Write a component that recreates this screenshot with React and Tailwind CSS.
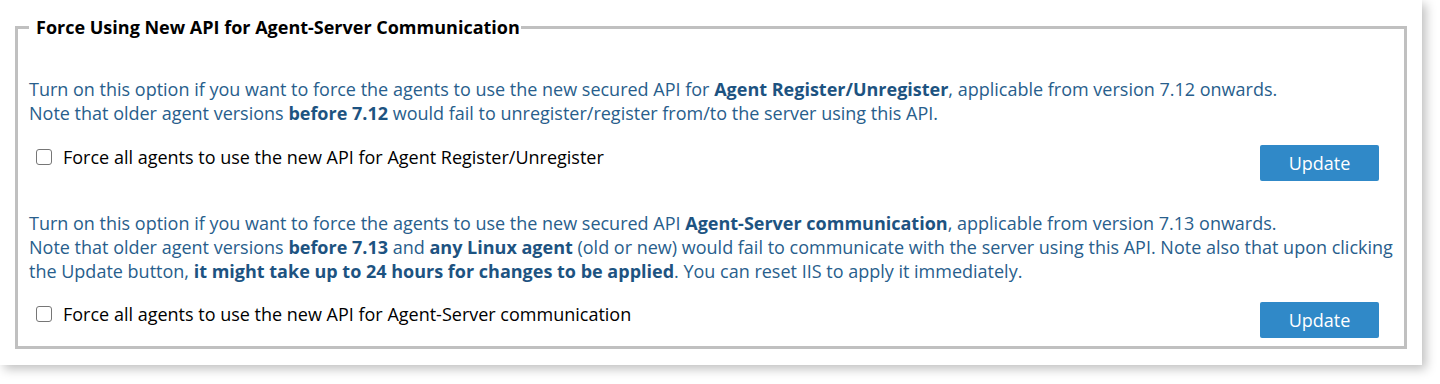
export default function App() {
  return (
    <div className="w-[1440px] h-[384px] bg-white" style={{ fontFamily: '"Open Sans", sans-serif' }}>
      <div className="w-[1422px] h-[365px] bg-white shadow-[4px_4px_10px_rgba(0,0,0,0.25)] pt-[15px] pl-[15px] pr-[15px]">
        <fieldset className="border-[3px] border-[#c0c0c0] px-[11px] pb-[8px] h-[334px]">
          <legend className="pl-[7px] pr-[1px] text-[18px] leading-[24px] font-bold text-black">
            Force Using New API for Agent-Server Communication
          </legend>

          <div className="pt-[38px] flex flex-col gap-[30px]">
            <div>
              <p className="text-[18px] leading-[24px] text-[#285e8c] mb-[20px]">
                Turn on this option if you want to force the agents to use the new secured API for{' '}
                <b className="text-[#1d5381]">Agent Register/Unregister</b>, applicable from version 7.12 onwards.
                <br />
                Note that older agent versions <b className="text-[#1d5381]">before 7.12</b> would fail to unregister/register from/to the server using this API.
              </p>
              <div className="flex items-start justify-between">
                <label className="flex items-center gap-[11px] pl-[7px] text-[18px] leading-[24px] text-black">
                  <span className="w-[16px] h-[16px] rounded-[3px] border border-[#767676] bg-white" />
                  Force all agents to use the new API for Agent Register/Unregister
                </label>
                <button className="w-[119px] h-[36px] mr-[14px] rounded-[2px] bg-[#3089c8] text-white text-[18px]">
                  Update
                </button>
              </div>
            </div>

            <div>
              <p className="text-[18px] leading-[24px] text-[#285e8c] mb-[19px] whitespace-nowrap">
                Turn on this option if you want to force the agents to use the new secured API{' '}
                <b className="text-[#1d5381]">Agent-Server communication</b>, applicable from version 7.13 onwards.
                <br />
                Note that older agent versions <b className="text-[#1d5381]">before 7.13</b> and{' '}
                <b className="text-[#1d5381]">any Linux agent</b> (old or new) would fail to communicate with the server using this API. Note also that upon clicking
                <br />
                the Update button, <b className="text-[#1d5381]">it might take up to 24 hours for changes to be applied</b>. You can reset IIS to apply it immediately.
              </p>
              <div className="flex items-start justify-between">
                <label className="flex items-center gap-[11px] pl-[7px] text-[18px] leading-[24px] text-black">
                  <span className="w-[16px] h-[16px] rounded-[3px] border border-[#767676] bg-white" />
                  Force all agents to use the new API for Agent-Server communication
                </label>
                <button className="w-[119px] h-[36px] mr-[14px] rounded-[2px] bg-[#3089c8] text-white text-[18px]">
                  Update
                </button>
              </div>
            </div>
          </div>
        </fieldset>
      </div>
    </div>
  )
}
